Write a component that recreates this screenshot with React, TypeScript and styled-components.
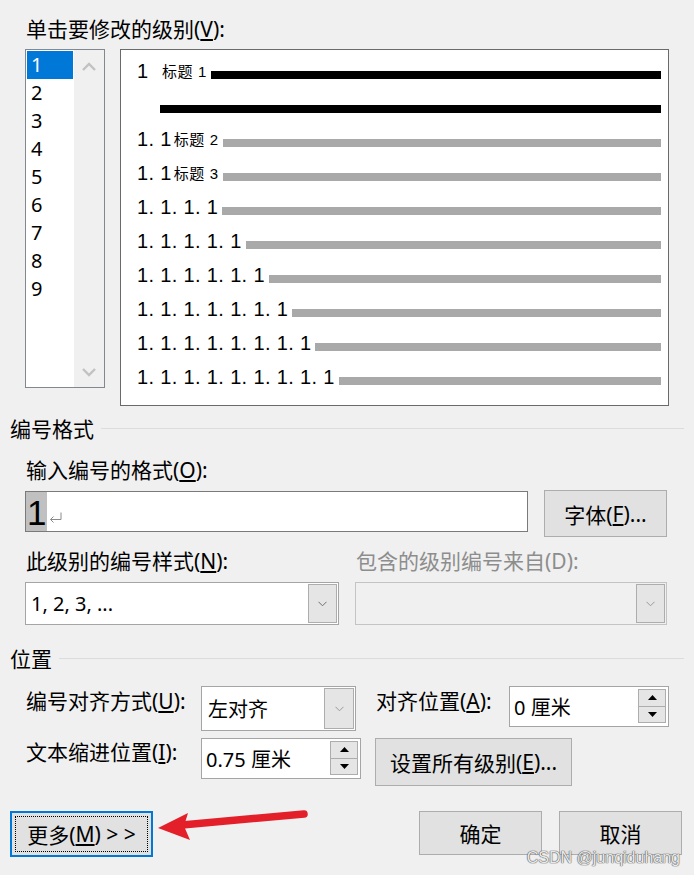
import React from 'react';
import styled, { createGlobalStyle } from 'styled-components';

const GlobalStyle = createGlobalStyle`
  html, body {
    margin: 0;
    padding: 0;
    background: #f0f0f0;
  }
  * {
    box-sizing: border-box;
  }
`;

const FONT = `"Noto Sans", "Noto Sans CJK SC", sans-serif`;

const Page = styled.div`
  position: relative;
  width: 694px;
  height: 875px;
  padding-top: 17px;
  background: #f0f0f0;
  color: #000;
  font-family: ${FONT};
  font-size: 21px;
  display: flex;
  flex-direction: column;
  overflow: hidden;
`;

const Label = styled.div<{ $disabled?: boolean; $top?: number }>`
  font-size: 21px;
  line-height: 24px;
  height: 24px;
  white-space: nowrap;
  color: ${(p) => (p.$disabled ? '#8d8d8d' : '#000')};
  margin-top: ${(p) => p.$top ?? 0}px;
`;

const TopLabel = styled(Label)`
  padding-left: 26px;
`;

const TopRow = styled.div`
  display: flex;
  align-items: flex-start;
  gap: 15px;
  margin-top: 8px;
  padding-left: 25px;
`;

const ListBox = styled.div`
  width: 80px;
  height: 339px;
  border: 1px solid #828790;
  background: #fff;
  display: flex;
`;

const ListItems = styled.div`
  width: 48px;
  padding: 1px;
  display: flex;
  flex-direction: column;
`;

const ListItem = styled.div<{ $selected?: boolean }>`
  height: 28px;
  line-height: 28px;
  padding-left: 4px;
  font-size: 20px;
  background: ${(p) => (p.$selected ? '#0078d7' : 'transparent')};
  color: ${(p) => (p.$selected ? '#fff' : '#000')};
`;

const ScrollBar = styled.div`
  flex: 1;
  background: #f0f0f0;
  display: flex;
  flex-direction: column;
  justify-content: space-between;
  align-items: center;
  padding: 12px 0 10px;
`;

const Preview = styled.div`
  width: 549px;
  height: 357px;
  border: 1px solid #6a6a6a;
  background: #fff;
  padding: 1px 7px 0 16px;
  display: flex;
  flex-direction: column;
`;

const PreviewRow = styled.div`
  height: 34px;
  display: flex;
  align-items: flex-end;
`;

const LevelNumber = styled.span<{ $width?: number }>`
  font-family: "Liberation Sans", "Noto Sans CJK SC", sans-serif;
  font-size: 20px;
  line-height: 20px;
  letter-spacing: 0.35px;
  white-space: pre;
  margin-bottom: 4px;
  width: ${(p) => (p.$width ? `${p.$width}px` : 'auto')};
  flex: none;
`;

const Caption = styled.span`
  font-family: "Liberation Sans", "Noto Sans CJK SC", sans-serif;
  font-size: 15px;
  line-height: 16px;
  letter-spacing: 0.6px;
  margin: 0 4px 5px 2px;
  white-space: pre;
  flex: none;
`;

const Bar = styled.div<{ $dark?: boolean; $indent?: number }>`
  flex: 1;
  height: 8px;
  margin-bottom: 6px;
  margin-left: ${(p) => p.$indent ?? 4}px;
  background: ${(p) => (p.$dark ? '#000' : '#a9a9a9')};
`;

const Section = styled.div<{ $top: number }>`
  margin-top: ${(p) => p.$top}px;
  padding-left: 10px;
`;

const SectionHeader = styled.div`
  display: flex;
  align-items: center;
  gap: 7px;
  font-size: 21px;
  line-height: 24px;
  height: 24px;
  padding-right: 10px;
  &::after {
    content: '';
    flex: 1;
    height: 1px;
    margin-top: -2px;
    background: #dcdcdc;
  }
`;

const Group = styled.div`
  padding-left: 15px;
  padding-right: 27px;
  display: flex;
  flex-direction: column;
`;

const Indented = styled.div`
  padding-left: 1px;
`;

const Row = styled.div<{ $top: number; $gap?: number }>`
  display: flex;
  align-items: flex-start;
  gap: ${(p) => p.$gap ?? 16}px;
  margin-top: ${(p) => p.$top}px;
`;

const LabelPair = styled.div`
  display: grid;
  grid-template-columns: 330px auto;
  margin-top: 12px;
  padding-left: 1px;
`;

const FormatInput = styled.div`
  width: 504px;
  height: 41px;
  margin-top: 1px;
  border: 1px solid #7a7a7a;
  background: #fff;
  display: flex;
  align-items: stretch;
`;

const FormatDigit = styled.span`
  width: 21px;
  background: #c0c0c0;
  font-family: "Liberation Sans", sans-serif;
  font-size: 35px;
  line-height: 42px;
  padding-left: 1px;
  overflow: hidden;
`;

const ReturnMark = styled.svg`
  align-self: flex-end;
  margin: 0 0 8px 2px;
`;

const Button = styled.div<{ $w: number; $h: number; $focused?: boolean }>`
  width: ${(p) => p.$w}px;
  height: ${(p) => p.$h}px;
  background: #e1e1e1;
  border: ${(p) => (p.$focused ? '2px solid #0078d7' : '1px solid #adadad')};
  display: flex;
  align-items: center;
  justify-content: center;
  font-size: 21px;
  white-space: pre;
  flex: none;
  position: relative;
`;

const FocusRing = styled.div`
  position: absolute;
  inset: 3px;
  border: 1px dotted #000;
`;

const Field = styled.div<{ $w: number; $h: number; $disabled?: boolean }>`
  width: ${(p) => p.$w}px;
  height: ${(p) => p.$h}px;
  border: 1px solid ${(p) => (p.$disabled ? '#c4c4c4' : '#a5a5a5')};
  background: ${(p) => (p.$disabled ? '#f0f0f0' : '#fff')};
  display: flex;
  align-items: stretch;
  padding: 1px;
  flex: none;
`;

const FieldText = styled.span<{ $pad?: number }>`
  flex: 1;
  display: flex;
  align-items: center;
  padding-left: ${(p) => p.$pad ?? 3}px;
  font-size: 20px;
  white-space: nowrap;
`;

const DropButton = styled.div<{ $w?: number }>`
  width: ${(p) => p.$w ?? 29}px;
  background: #e5e5e5;
  border: 1px solid #adadad;
  display: flex;
  align-items: center;
  justify-content: center;
`;

const SpinColumn = styled.div`
  width: 28px;
  display: flex;
  flex-direction: column;
  margin: 1px 1px 2px 0;
`;

const SpinButton = styled.div`
  flex: 1;
  background: #e5e5e5;
  border: 1px solid #adadad;
  display: flex;
  align-items: center;
  justify-content: center;
  & + & {
    border-top: none;
  }
`;

const PosGrid = styled.div`
  display: grid;
  grid-template-columns: 176px 174px 134px 160px;
  grid-template-rows: 45px 48px;
  row-gap: 7px;
  margin-top: 15px;
`;

const GridLabel = styled(Label)`
  padding-left: 1px;
`;

const Footer = styled.div`
  display: flex;
  align-items: flex-start;
  margin-top: 25px;
  padding: 0 12px 0 10px;
  gap: 17px;
`;

const Spacer = styled.div`
  flex: 1;
`;

const Annotation = styled.svg`
  position: absolute;
  left: 150px;
  top: 803px;
`;

const Watermark = styled.div`
  position: absolute;
  right: 14px;
  bottom: 8px;
  font-family: "Liberation Sans", sans-serif;
  font-size: 16px;
  color: rgba(255, 255, 255, 0.9);
  text-shadow: 0 0 1px #555, 0 0 1px #555, 0 0 1px #777;
`;

const Chevron = ({ color = '#6f6f6f' }: { color?: string }) => (
  <svg width="9" height="6" viewBox="0 0 9 6">
    <path d="M0.5 0.8 L4.5 4.8 L8.5 0.8" fill="none" stroke={color} strokeWidth="1" />
  </svg>
);

const ScrollArrow = ({ up }: { up?: boolean }) => (
  <svg width="14" height="9" viewBox="0 0 14 9">
    <path
      d={up ? 'M1 8 L7 2 L13 8' : 'M1 1 L7 7 L13 1'}
      fill="none"
      stroke="#c2c2c2"
      strokeWidth="2.4"
    />
  </svg>
);

const SpinArrow = ({ up }: { up?: boolean }) => (
  <svg width="9" height="5" viewBox="0 0 9 5">
    <path d={up ? 'M0 5 L4.5 0 L9 5 Z' : 'M0 0 L4.5 5 L9 0 Z'} fill="#000" />
  </svg>
);

const Spin = ({ w, h, value }: { w: number; h: number; value: string }) => (
  <Field $w={w} $h={h}>
    <FieldText>{value}</FieldText>
    <SpinColumn>
      <SpinButton>
        <SpinArrow up />
      </SpinButton>
      <SpinButton>
        <SpinArrow />
      </SpinButton>
    </SpinColumn>
  </Field>
);

const levels = ['1', '2', '3', '4', '5', '6', '7', '8', '9'];

const deepLevels = [
  '1. 1. 1. 1',
  '1. 1. 1. 1. 1',
  '1. 1. 1. 1. 1. 1',
  '1. 1. 1. 1. 1. 1. 1',
  '1. 1. 1. 1. 1. 1. 1. 1',
  '1. 1. 1. 1. 1. 1. 1. 1. 1',
];

export default function App() {
  return (
    <>
      <GlobalStyle />
      <Page>
        <TopLabel>
          单击要修改的级别(<u>V</u>):
        </TopLabel>
        <TopRow>
          <ListBox>
            <ListItems>
              {levels.map((l, i) => (
                <ListItem key={l} $selected={i === 0}>
                  {l}
                </ListItem>
              ))}
            </ListItems>
            <ScrollBar>
              <ScrollArrow up />
              <ScrollArrow />
            </ScrollBar>
          </ListBox>
          <Preview>
            <PreviewRow>
              <LevelNumber $width={23}>1</LevelNumber>
              <Caption>标题 1</Caption>
              <Bar $dark $indent={0} />
            </PreviewRow>
            <PreviewRow>
              <Bar $dark $indent={23} />
            </PreviewRow>
            <PreviewRow>
              <LevelNumber>1. 1</LevelNumber>
              <Caption>标题 2</Caption>
              <Bar $indent={0} />
            </PreviewRow>
            <PreviewRow>
              <LevelNumber>1. 1</LevelNumber>
              <Caption>标题 3</Caption>
              <Bar $indent={0} />
            </PreviewRow>
            {deepLevels.map((t) => (
              <PreviewRow key={t}>
                <LevelNumber>{t}</LevelNumber>
                <Bar />
              </PreviewRow>
            ))}
          </Preview>
        </TopRow>

        <Section $top={11}>
          <SectionHeader>编号格式</SectionHeader>
          <Group>
            <Indented>
              <Label $top={17}>
                输入编号的格式(<u>O</u>):
              </Label>
            </Indented>
            <Row $top={8}>
              <FormatInput>
                <FormatDigit>1</FormatDigit>
                <ReturnMark width="13" height="11" viewBox="0 0 13 11">
                  <path
                    d="M12 0.5 V7.5 H1.5 M4.5 4.5 L1.5 7.5 L4.5 10.5"
                    fill="none"
                    stroke="#8a8a8a"
                    strokeWidth="1"
                  />
                </ReturnMark>
              </FormatInput>
              <Button $w={123} $h={47}>
                字体(<u>F</u>)...
              </Button>
            </Row>
            <LabelPair>
              <Label>
                此级别的编号样式(<u>N</u>):
              </Label>
              <Label $disabled>包含的级别编号来自(D):</Label>
            </LabelPair>
            <Row $top={9} $gap={16}>
              <Field $w={314} $h={43}>
                <FieldText $pad={4}>1, 2, 3, ...</FieldText>
                <DropButton>
                  <Chevron />
                </DropButton>
              </Field>
              <Field $w={312} $h={43} $disabled>
                <FieldText />
                <DropButton>
                  <Chevron color="#9a9a9a" />
                </DropButton>
              </Field>
            </Row>
          </Group>
        </Section>

        <Section $top={22}>
          <SectionHeader>位置</SectionHeader>
          <Group>
            <PosGrid>
              <GridLabel $top={3}>
                编号对齐方式(<u>U</u>):
              </GridLabel>
              <Field $w={155} $h={45}>
                <FieldText $pad={5}>左对齐</FieldText>
                <DropButton $w={30}>
                  <Chevron color="#9a9a9a" />
                </DropButton>
              </Field>
              <GridLabel $top={3}>
                对齐位置(<u>A</u>):
              </GridLabel>
              <Spin w={160} h={41} value="0 厘米" />
              <GridLabel $top={2}>
                文本缩进位置(<u>I</u>):
              </GridLabel>
              <Spin w={160} h={41} value="0.75 厘米" />
              <Button $w={197} $h={48}>
                设置所有级别(<u>E</u>)...
              </Button>
            </PosGrid>
          </Group>
        </Section>

        <Footer>
          <Button $w={143} $h={46} $focused>
            <FocusRing />
            更多(<u>M</u>) &gt; &gt;
          </Button>
          <Spacer />
          <Button $w={123} $h={44}>
            确定
          </Button>
          <Button $w={123} $h={44}>
            取消
          </Button>
        </Footer>

        <Annotation width="165" height="45" viewBox="0 0 165 45">
          <line x1="32" y1="22" x2="154" y2="11" stroke="#e3202a" strokeWidth="7.5" strokeLinecap="round" />
          <polygon points="8,25 38,10 34,23 40,37" fill="#e3202a" />
        </Annotation>
        <Watermark>CSDN @junqiduhang</Watermark>
      </Page>
    </>
  );
}
